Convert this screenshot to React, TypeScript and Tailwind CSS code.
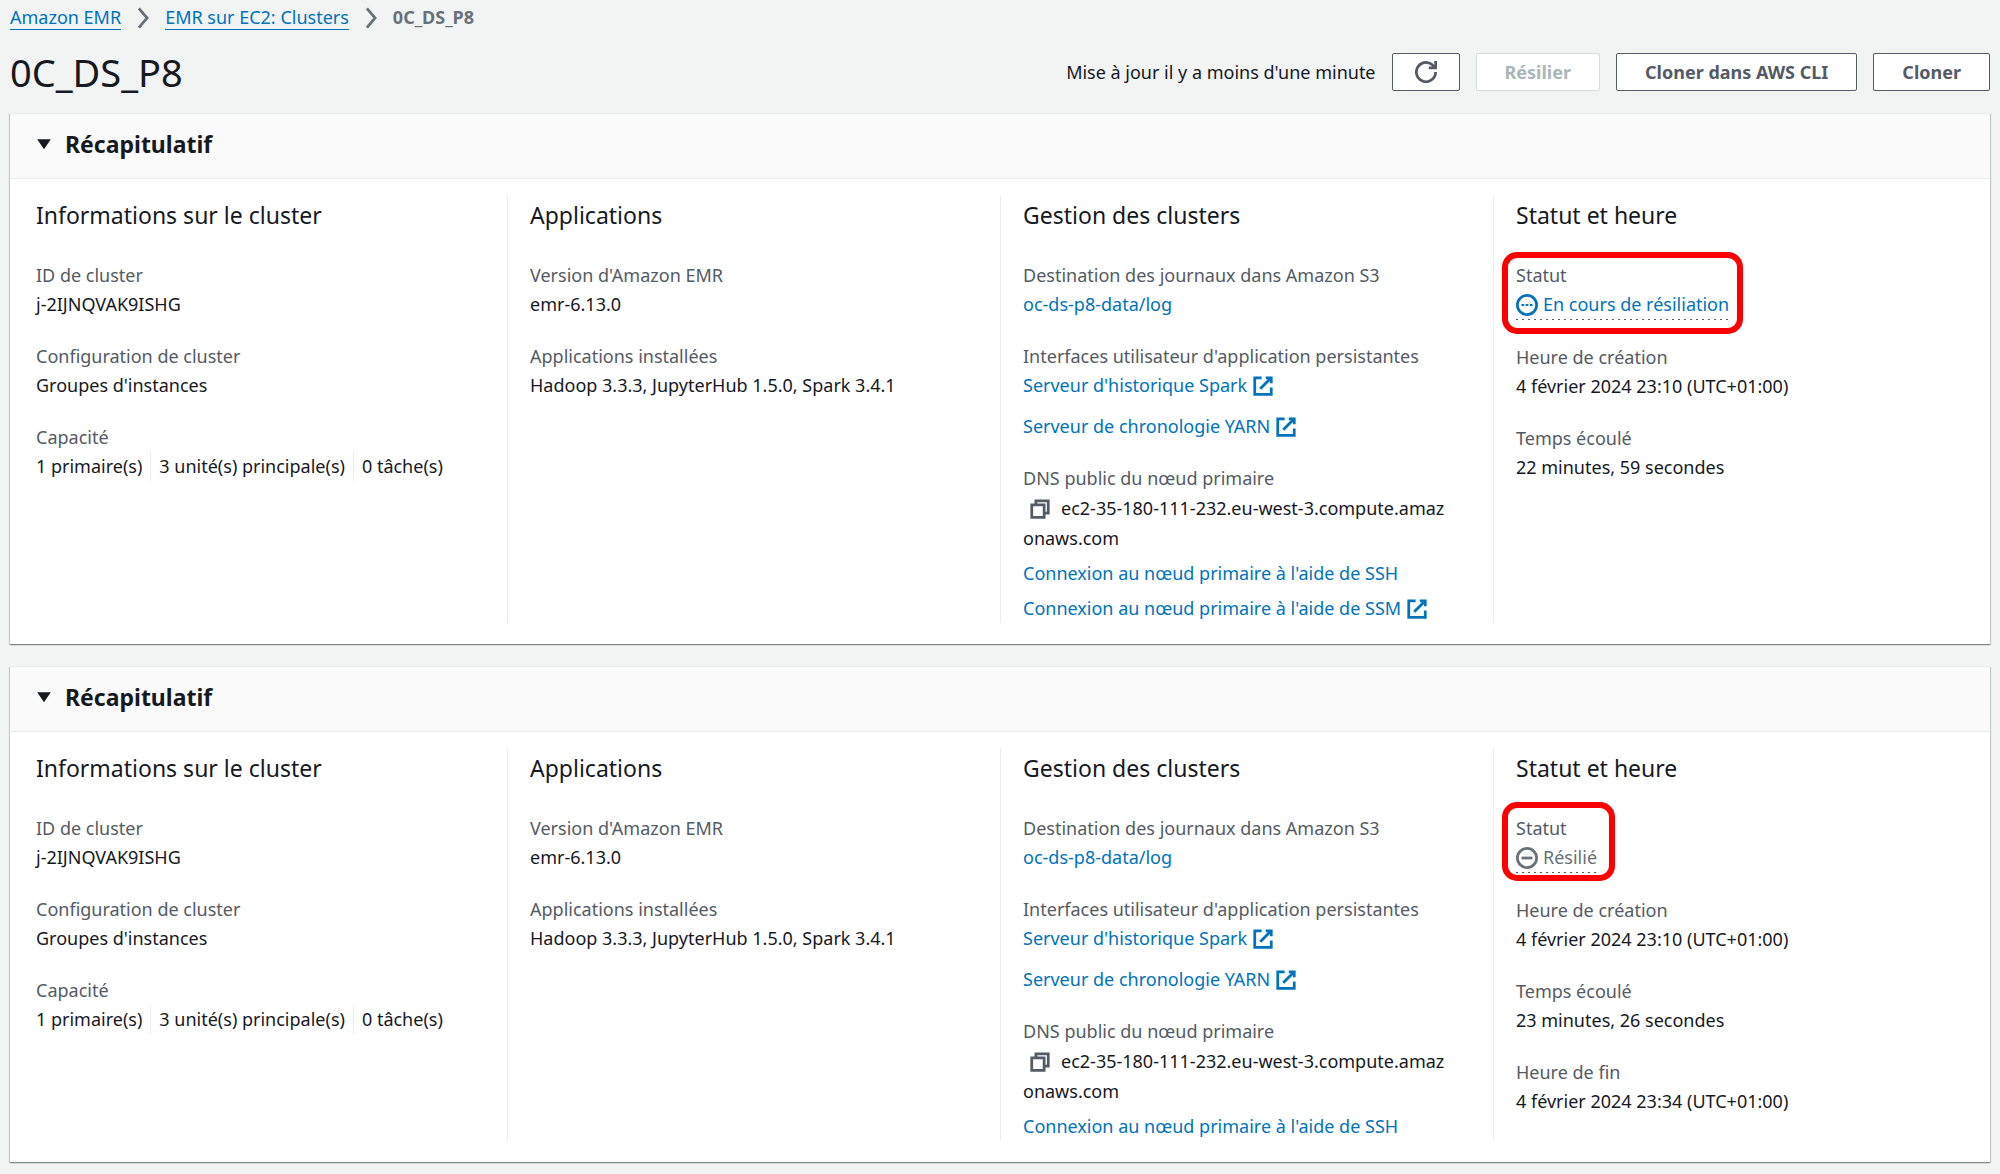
import React from "react";

type IconProps = { className?: string; children: React.ReactNode };

function Icon({ className = "", children }: IconProps) {
  return (
    <svg
      viewBox="0 0 16 16"
      aria-hidden="true"
      fill="none"
      stroke="currentColor"
      strokeWidth="2"
      className={`inline-block size-[22px] shrink-0 ${className}`}
    >
      {children}
    </svg>
  );
}

function ExternalIcon() {
  return (
    <Icon>
      <path d="M10 2h4v4" />
      <path d="M6 10l8-8" />
      <path d="M14 9.05V14H2V2h5" />
    </Icon>
  );
}

function Chevron() {
  return (
    <Icon className="text-[#687078]">
      <path d="M5 1l6 7-6 7" />
    </Icon>
  );
}

function TextLink({ children, external = false }: { children: React.ReactNode; external?: boolean }) {
  return (
    <a href="#" className="flex items-center gap-[5px] self-start text-[#0073bb]">
      {children}
      {external && <ExternalIcon />}
    </a>
  );
}

function Field({ label, children }: { label: string; children: React.ReactNode }) {
  return (
    <div>
      <dt className="text-[#545b64]">{label}</dt>
      <dd>{children}</dd>
    </div>
  );
}

function Column({ title, children }: { title: string; children: React.ReactNode }) {
  return (
    <div className="border-l border-[#eaeded] pr-11 pl-[22px] first:border-l-0">
      <h3 className="text-[23px] leading-[40px]">{title}</h3>
      <dl className="mt-[26px] flex flex-col gap-[23px]">{children}</dl>
    </div>
  );
}

function Status({ running }: { running: boolean }) {
  return (
    <div className="relative self-start">
      <dt className="text-[#545b64]">Statut</dt>
      <dd
        className={`flex items-center gap-[5px] bg-[repeating-linear-gradient(90deg,#545b64_0_2px,transparent_2px_6px)] bg-[length:100%_1px] bg-bottom bg-no-repeat pb-px ${
          running ? "text-[#0073bb]" : "text-[#687078]"
        }`}
      >
        <Icon>
          <circle cx="8" cy="8" r="7" />
          {running ? <path d="M4 8h2M7 8h2M10 8h2" strokeWidth="1.6" /> : <path d="M4 8h8" />}
        </Icon>
        {running ? "En cours de résiliation" : "Résilié"}
      </dd>
      <div
        className={`pointer-events-none absolute -left-[14px] rounded-[15px] border-[6px] border-[#ff0000] ${
          running ? "-top-[9px] -right-[14px] -bottom-[14px]" : "-top-[12px] -right-[18px] -bottom-[8px]"
        }`}
      />
    </div>
  );
}

function Summary({ running, elapsed, end }: { running: boolean; elapsed: string; end?: string }) {
  return (
    <section className="border-t border-[#eaeded] bg-white shadow-[0_1px_1px_0_rgba(0,28,36,0.3),1px_1px_1px_0_rgba(0,28,36,0.15),-1px_1px_1px_0_rgba(0,28,36,0.15)]">
      <h2 className="border-b border-[#eaeded] bg-[#fafafa]">
        <button type="button" aria-expanded="true" className="flex h-16 w-full items-center gap-[10px] px-[23px] pb-1 text-[23px] font-bold">
          <Icon>
            <path d="M4 5h8l-4 6z" fill="currentColor" strokeWidth="1" />
          </Icon>
          Récapitulatif
        </button>
      </h2>
      <div className="grid grid-cols-4 px-1 pt-4 pb-[21px]">
        <Column title="Informations sur le cluster">
          <Field label="ID de cluster">j-2IJNQVAK9ISHG</Field>
          <Field label="Configuration de cluster">Groupes d'instances</Field>
          <Field label="Capacité">
            <ul className="flex divide-x divide-[#eaeded]">
              <li className="pr-2">1 primaire(s)</li>
              <li className="px-2">3 unité(s) principale(s)</li>
              <li className="pl-2">0 tâche(s)</li>
            </ul>
          </Field>
        </Column>
        <Column title="Applications">
          <Field label="Version d'Amazon EMR">emr-6.13.0</Field>
          <Field label="Applications installées">Hadoop 3.3.3, JupyterHub 1.5.0, Spark 3.4.1</Field>
        </Column>
        <Column title="Gestion des clusters">
          <Field label="Destination des journaux dans Amazon S3">
            <TextLink>oc-ds-p8-data/log</TextLink>
          </Field>
          <Field label="Interfaces utilisateur d'application persistantes">
            <div className="flex flex-col gap-3">
              <TextLink external>Serveur d'historique Spark</TextLink>
              <TextLink external>Serveur de chronologie YARN</TextLink>
            </div>
          </Field>
          <Field label="DNS public du nœud primaire">
            <div className="flex flex-col gap-[6px]">
              <p className="leading-[30px] break-all">
                <button type="button" aria-label="Copier" className="mr-[10px] ml-[6px] inline-flex align-[-5px] text-[#545b64]">
                  <Icon>
                    <path d="M2 5h9v9H2z" />
                    <path d="M5 5V2h9v9h-3" />
                  </Icon>
                </button>
                ec2-35-180-111-232.eu-west-3.compute.amazonaws.com
              </p>
              <TextLink>Connexion au nœud primaire à l'aide de SSH</TextLink>
              {running && <TextLink external>Connexion au nœud primaire à l'aide de SSM</TextLink>}
            </div>
          </Field>
        </Column>
        <Column title="Statut et heure">
          <Status running={running} />
          <Field label="Heure de création">4 février 2024 23:10 (UTC+01:00)</Field>
          <Field label="Temps écoulé">{elapsed}</Field>
          {end && <Field label="Heure de fin">{end}</Field>}
        </Column>
      </div>
    </section>
  );
}

const buttonClass =
  "flex h-[38px] items-center rounded-[2px] border border-[#545b64] bg-white font-bold text-[#545b64] disabled:border-[#d5dbdb] disabled:text-[#aab7b8]";

export default function App() {
  return (
    <div className="min-h-screen bg-[#f2f3f3] px-[10px] pb-3 font-['Noto_Sans',sans-serif] text-[18px] leading-[29px] text-[#16191f]">
      <nav aria-label="Fil d'Ariane" className="pt-[3px]">
        <ol className="flex items-center gap-[11px]">
          <li><a href="#" className="border-b border-[#0073bb] text-[#0073bb]">Amazon EMR</a></li>
          <li className="flex"><Chevron /></li>
          <li><a href="#" className="border-b border-[#0073bb] text-[#0073bb]">EMR sur EC2: Clusters</a></li>
          <li className="flex"><Chevron /></li>
          <li className="font-bold text-[#687078]">0C_DS_P8</li>
        </ol>
      </nav>
      <header className="flex items-center justify-between pt-4 pb-[17px]">
        <h1 className="text-[38px] leading-[48px]">0C_DS_P8</h1>
        <div className="flex items-center gap-4">
          <span>Mise à jour il y a moins d'une minute</span>
          <button type="button" aria-label="Actualiser" className={`${buttonClass} px-[22px]`}>
            <Icon>
              <path d="M10 5h5V0" />
              <path d="M15 8a7 7 0 1 1-.7-3" />
            </Icon>
          </button>
          <button type="button" disabled className={`${buttonClass} px-7`}>Résilier</button>
          <button type="button" className={`${buttonClass} px-7`}>Cloner dans AWS CLI</button>
          <button type="button" className={`${buttonClass} px-7`}>Cloner</button>
        </div>
      </header>
      <main className="flex flex-col gap-[22px]">
        <Summary running elapsed="22 minutes, 59 secondes" />
        <Summary running={false} elapsed="23 minutes, 26 secondes" end="4 février 2024 23:34 (UTC+01:00)" />
      </main>
    </div>
  );
}
